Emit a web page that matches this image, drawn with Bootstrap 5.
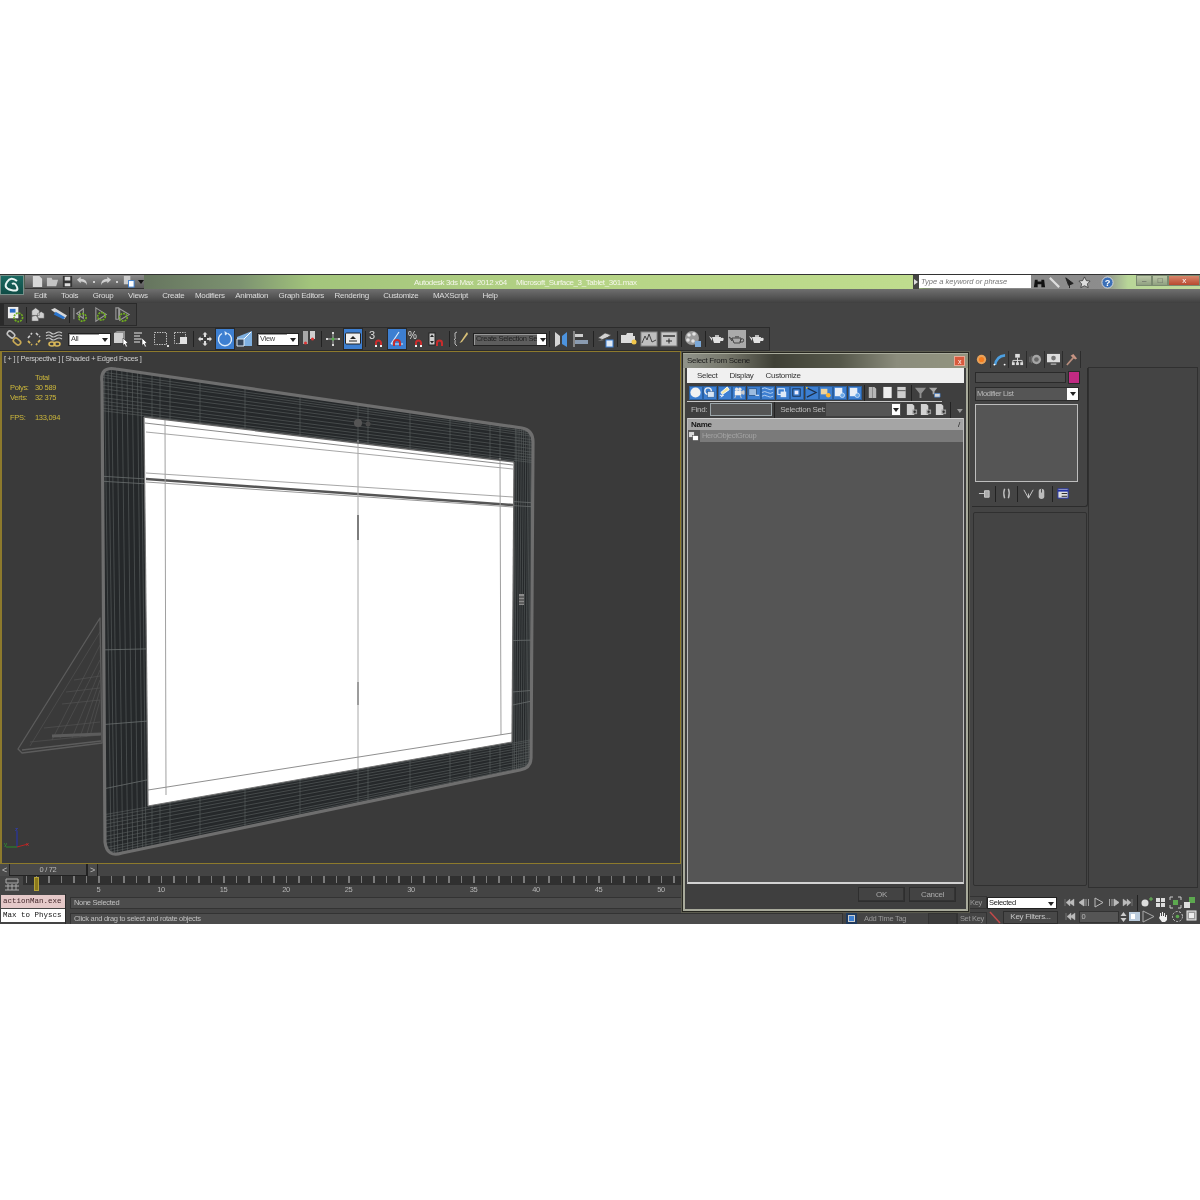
<!DOCTYPE html>
<html lang="en">
<head>
<meta charset="UTF-8">
<title>Autodesk 3ds Max 2012 x64</title>
<link href="https://cdn.jsdelivr.net/npm/bootstrap@5.3.0/dist/css/bootstrap.min.css" rel="stylesheet">
<style>
body { background:#fff; padding-top:274px; font-family:"Liberation Sans",Arial,sans-serif; font-size:7.5px; letter-spacing:-.3px; line-height:1; }
.max-app { width:1200px; height:650px; background:#444; color:#c8c8c8; position:relative; overflow:hidden; filter:blur(.45px); }
.ic { width:18px; height:18px; display:block; flex:none; }
.ic-sm { width:13px; height:13px; display:block; flex:none; }
.slot { width:20px; height:22px; flex:none; }
.slot.on { background:#3d7fd1; box-shadow:inset 0 0 0 1px #2a2a2a; }
.tsep { flex:none; align-self:center; height:16px; border-left:1px solid #222; margin:0 1.5px; }
.tsep2 { margin:0 2px; }

/* title and menu */
.title-row { height:15px; border-top:1px solid #333; background:linear-gradient(90deg,#4a5a4c 0,#66755f 12%,#7c9270 20%,#a3c57c 26%,#b6d486 50%,#bfdc8e 76%,#7c9168 77%,#858585 78%,#8d8d8d 92%,#b8d698 94%,#c2dc9a 100%); }
.logo-box { width:24px; height:20px; background:linear-gradient(#1c6b63,#0f4a44); box-shadow:inset 0 0 0 1px #78908a; z-index:2; }
.quick-bar { width:119px; height:14px; background:linear-gradient(#8a8a8a,#5a5a5a); border-bottom:1px solid #333; gap:2px; padding-left:2px; margin-left:1px; }
.qa-dot { width:6px; height:6px; flex:none; position:relative; }
.qa-dot::after { content:""; position:absolute; left:2px; top:2px; width:2px; height:2px; background:#ccc; }
.title-txt { width:224px; margin-left:270px; color:#f4f6ea; white-space:pre; font-size:8px; letter-spacing:-.4px; }
.search-arrow { width:6px; height:14px; background:#444; margin-left:275px; }
.search-box { width:112px; height:13px; padding:0 2px; border:0; border-radius:0; font-size:7.5px; line-height:13px; font-style:italic; color:#777; background:#fff; }
.search-box::placeholder { color:#777; opacity:1; }
.help-ic { margin-left:8px; }
.win-ctl { height:11px; width:16px; background:linear-gradient(#bcc8a8,#8fa080); border:1px solid #7a8a70; color:#555; font-size:8px; }
.win-ctl.close-red { width:32px; background:linear-gradient(#d8856a,#b84a30); color:#fff; }
.menu-row { height:14px; padding-left:34px; background:linear-gradient(#6f6f6f,#585858 50%,#404040); color:#dcdcdc; font-size:8px; }
.menu-row span { margin-right:14.5px; }
.menu-row span.snug { margin-left:-4px; }

/* toolbars */
.tb1-row { height:24px; }
.tb-float { width:137px; height:23px; border:1px solid #2a2a2a; border-left:4px solid #2a2a2a; background:#3f3f3f; padding-left:3px; }
.tb-float .ic { width:17px; height:17px; }
.tb2-row { height:24px; width:770px; padding-left:4px; border:1px solid #2c2c2c; border-left:0; background:#3f3f3f; }
.tb-combo { height:13px; flex:none; background:#fff; border:1px solid #222; color:#444; padding-left:2px; overflow:hidden; white-space:nowrap; box-shadow:inset 1px 1px 0 #999; }
.tb-combo.dim { background:#5d5d5d; color:#222; }
.combo-arrow { width:11px; height:100%; background:#fff; margin-left:auto; flex:none; position:relative; }
.combo-arrow::after { content:""; position:absolute; left:3px; top:4px; border:3px solid transparent; border-top:4px solid #222; border-bottom:0; }

/* viewport */
.middle-row { height:543px; }
.left-col { width:970px; }
.viewport-row { height:513px; }
.viewport { width:681px; height:513px; background:#3a3a3a; border:1px solid #8d7a2c; border-left:2px solid #8d7a2c; position:relative; overflow:hidden; }
.vp-canvas { position:absolute; left:-2px; top:-1px; width:681px; height:513px; }
.vp-label { position:absolute; left:2px; top:3px; color:#cfcfcf; white-space:pre; }
.vp-stats { position:absolute; left:8px; top:22px; color:#cdb83c; display:grid; grid-template-columns:25px 40px; row-gap:1.6px; line-height:8.4px; }

/* dialog */
.scene-dlg { position:absolute; left:682px; top:78px; width:287px; height:560px; padding:1px 4px 4px; background:#3f3f3f; border:1px solid #262620; outline:1px solid #5c5c50; box-shadow:inset 0 0 0 2px #a9ab9c; z-index:5; font-size:7.5px; }
.dlg-title { height:14px; margin:0 -4px; padding:0 3px 0 4px; color:#1c1c1c; font-size:8px; background:linear-gradient(90deg,#90938a 0,#77786c 15%,#3f4036 32%,#55574a 55%,#8b8c7c 75%,#92947f 100%); }
.dlg-close { width:11px; height:10px; background:#d8593c; box-shadow:inset 0 0 0 1px #e9a793; color:#fff; font-size:7px; }
.dlg-menu { height:15px; background:#f0f0f0; color:#333; padding-left:10px; gap:12px; font-size:8px; }
.dlg-tools { height:19px; padding:2px 0 1px 2px; margin-right:22px; border-bottom:1px solid #c8c8c8; }
.dlg-blue { width:14px; height:14px; margin-right:.45px; background:#3d7fd1; flex:none; box-shadow:inset 0 0 0 1px #2a5f9f; }
.dlg-plain { width:14.5px; height:14px; flex:none; }
.dlg-find { height:15px; padding-left:4px; color:#bbb; font-size:8px; white-space:nowrap; }
.dlg-input { height:13px; background:#555; border:1px solid #9aa4a8; flex:none; }
.dlg-input .combo-arrow { width:8px; }
.dlg-input .combo-arrow::after { left:1.5px; }
.dlg-list { height:466px; margin-top:1px; background:#555; border:1px solid #bcbcbc; border-top:0; border-bottom:2px solid #d2d2d2; }
.dlg-head { height:12px; background:#a5a5a5; color:#161616; font-weight:700; padding:0 3px; border-top:1px solid #d0d0d0; font-size:8px; }
.dlg-rowitem { height:12px; color:#a3a3a3; }
.dlg-rowname { background:#7a7a7a; height:12px; margin-left:1px; padding-left:2px; }
.dlg-foot { height:26px; gap:4px; padding:3px 8px 0 0; }
.dlg-btn { width:47px; height:15px; padding:0; border:1px solid #2e2e2e; border-radius:0; background:#434343; color:#aaa; font-size:8px; letter-spacing:-.3px; line-height:1; box-shadow:inset -1px -1px 0 #333; }

/* command panel */
.right-col { width:230px; height:537px; padding-left:2px; }
.cmd-col { width:116px; }
.cmd-tabs { height:17px; padding-left:1px; }
.cmd-tab { width:18px; height:17px; border-right:1px solid #2c2c2c; flex:none; }
.cmd-body { height:139px; border:1px solid #2c2c2c; border-top:0; border-left:0; padding:4px 3px; border-radius:0 0 3px 0; }
.name-field { height:11px; width:91px; background:#4d4d4d; border:1px solid #2a2a2a; }
.swatch { width:10px; height:11px; background:#c12a83; margin-left:3px; box-shadow:0 0 0 1px #2a2a2a; }
.mod-combo { height:14px; width:104px; margin-top:4px; background:#555; border:1px solid #2a2a2a; color:#bbb; padding-left:1px; }
.stack-box { height:78px; width:103px; margin-top:3px; border:1px solid #bdbdbd; background:#555; }
.stack-tools { height:19px; margin-top:2px; padding-left:3px; }
.stack-tools .tsep { margin:0 4px; }
.roll-box { height:374px; width:114px; margin-top:5px; margin-left:1px; border:1px solid #303030; border-radius:2px; }
.side-col { width:110px; margin-top:16px; height:521px; border:1px solid #303030; }

/* track and status */
.time-row { height:12px; background:#444; }
.time-btn { width:10px; height:12px; color:#bbb; background:#4b4b4b; border-right:1px solid #222; font-size:9px; }
.time-val { width:78px; height:12px; background:#4a4a4a; color:#bbb; border-bottom:1px solid #222; border-right:2px solid #222; }
.track-row { height:18px; }
.track-ico { width:23px; }
.ruler-wrap { width:947px; height:18px; position:relative; }
.ruler { height:9px; background-color:#303030; background-image:repeating-linear-gradient(90deg,#7a7a7a 0,#7a7a7a 1px,transparent 1px,transparent 12.5px); background-position:13px 0; background-repeat:repeat-x; background-size:auto 7px; }
.ruler-num { height:9px; position:relative; }
.ruler-num span { position:absolute; top:1px; color:#b5b5b5; transform:translateX(-50%); }
.frame-pos { position:absolute; left:11px; top:1px; width:5px; height:14px; background:#8c7a1c; border:1px solid #b5a338; }
.status-row { height:30px; background:#444; }
.script-col { width:66px; padding:1px 0 0 1px; gap:1px; border-right:1px solid #2a2a2a; }
.script-line { height:13px; font-family:"Liberation Mono",monospace; font-size:7.5px; letter-spacing:0; color:#111; padding-left:2px; white-space:nowrap; background:#fff; }
.script-line.pink { background:#e5c9c9; color:#43272b; }
.status-mid { width:921px; padding:2px 0 0 4px; gap:3px; }
.status-field { height:12px; background:#4c4c4c; color:#c0c0c0; padding-left:3px; border:1px solid #333; }
.tag-ic { width:11px; height:11px; background:#3d7fd1; margin:0 7px 0 3px; flex:none; box-shadow:inset 0 0 0 2px #203a5c, inset 0 0 0 3px #ccc; }
.tag-txt { width:64px; color:#9a9a9a; flex:none; }
.tag-box { width:29px; height:12px; background:#3c3c3c; border:1px solid #333; flex:none; }
.setkey { width:30px; height:13px; flex:none; color:#9a9a9a; background:#454545; border:1px solid #333; white-space:nowrap; }
.status-right { width:213px; padding-top:2px; }
.status-line { height:14px; }
.sel-combo { width:70px; height:12px; background:#fff; color:#222; border:1px solid #222; padding-left:1px; flex:none; }
.keyfilt { width:55px; height:13px; background:#484848; border:1px solid #2e2e2e; color:#c5c5c5; flex:none; font-size:8px; }
.frame-field { width:40px; height:12px; background:#555; border:1px solid #333; color:#bbb; padding-left:2px; flex:none; }
.mini { width:14.5px; height:14px; flex:none; }
.mini-run { margin-left:6px; }
.mini-run2 { margin-left:1px; }
</style>
</head>
<body>

<svg width="0" height="0" class="position-absolute">
  <defs>
    <symbol id="i-link" viewBox="0 0 18 18"><g fill="none" stroke="#c4c4c4" stroke-width="1.600"><rect x="2" y="2" width="8" height="5" rx="2.500" transform="rotate(40 6 4.500)"/></g><rect x="8" y="9" width="8" height="5" rx="2.500" transform="rotate(40 12 11.500)" fill="none" stroke="#c9aa55" stroke-width="1.600"/></symbol>
    <symbol id="i-unlink" viewBox="0 0 18 18"><g fill="none" stroke="#cfcfcf" stroke-width="1.600" stroke-dasharray="3 1.500"><path d="M3 8 L7 3 M11 3 L15 7"/></g><g fill="none" stroke="#d8b75a" stroke-width="1.800" stroke-dasharray="3 1.500"><path d="M3 11 L7 15 M15 10 L11 15"/></g></symbol>
    <symbol id="i-bind" viewBox="0 0 18 18"><g fill="none" stroke="#c8c8c8" stroke-width="1.100"><path d="M1 3q3-2 5 0t5 0 6 0M1 6q3-2 5 0t5 0 6 0M1 9q3-2 5 0t5 0 6 0"/></g><g fill="none" stroke="#d8b75a" stroke-width="1.600"><ellipse cx="7" cy="14" rx="3" ry="2"/><ellipse cx="12" cy="14" rx="3" ry="2"/></g></symbol>
    <symbol id="i-select" viewBox="0 0 18 18"><rect x="2" y="3" width="9" height="10" fill="#cfcfcf"/><path d="M2 3l3-2h8v9l-2 3V3z" fill="#8f8f8f"/><path d="M11 8l5 5-2 .5 1.500 3-1.500.5-1.500-3-1.500 1.500z" fill="#fff" stroke="#222" stroke-width=".5"/></symbol>
    <symbol id="i-byname" viewBox="0 0 18 18"><path d="M2 3h8M2 6h6M2 9h8M2 12h6" stroke="#b0b0b0" stroke-width="1.500"/><path d="M10 8l5 5-2 .5 1.500 3-1.500.5-1.500-3-1.500 1.500z" fill="#fff" stroke="#222" stroke-width=".5"/></symbol>
    <symbol id="i-rect" viewBox="0 0 18 18"><rect x="2.500" y="2.500" width="12" height="12" fill="#3f3f3f" stroke="#c0c0c0" stroke-dasharray="1.500 1"/><path d="M15 15h2v2h-2z" fill="#ddd"/></symbol>
    <symbol id="i-cross" viewBox="0 0 18 18"><rect x="2.500" y="2.500" width="11" height="11" fill="none" stroke="#bdbdbd" stroke-dasharray="1.500 1"/><rect x="8" y="7" width="7" height="7" fill="#e2e2e2"/></symbol>
    <symbol id="i-move" viewBox="0 0 18 18"><path d="M9 2l2.500 2.500H10V7H8V4.500H6.500zM9 16l-2.500-2.500H8V11h2v2.500h1.500zM2 9l2.500-2.500V8H7v2H4.500v1.500zM16 9l-2.500 2.500V10H11V8h2.500V6.500z" fill="#dcdcdc"/></symbol>
    <symbol id="i-rotate" viewBox="0 0 18 18"><path d="M6 3.500A6.500 6.500 0 1 0 12 3.500" fill="none" stroke="#dcebfa" stroke-width="1.400"/><path d="M8.500 1l3.500 2.500-3 2z" fill="#dcebfa"/></symbol>
    <symbol id="i-scale" viewBox="0 0 18 18"><path d="M1 7L16 1v15H1z" fill="#7fb0e0"/><path d="M1 9h7v7H1z" fill="#36465a" stroke="#dbe9f7"/><path d="M8 9L15 2" stroke="#fff"/></symbol>
    <symbol id="i-refs" viewBox="0 0 18 18"><rect x="3" y="1" width="5" height="13" fill="#a8a8a8"/><rect x="10" y="1" width="5" height="8" fill="#cfcfcf"/><circle cx="5.500" cy="13" r="1.500" fill="#d33"/><circle cx="12.500" cy="9" r="1.500" fill="#d33"/></symbol>
    <symbol id="i-pivot" viewBox="0 0 18 18"><path d="M9 3v12M3 9h12" stroke="#b8b8b8"/><path d="M8 2h2v2H8zM2 8h2v2H2zM14 8h2v2h-2zM8 14h2v2H8z" fill="#d8d8d8"/><circle cx="9" cy="9" r="1.500" fill="#55b04a"/></symbol>
    <symbol id="i-kbd" viewBox="0 0 18 18"><rect x="1.500" y="3" width="15" height="11" rx="1" fill="#efefef" stroke="#222"/><path d="M9 6l3 3H6z" fill="#222"/><path d="M5 11h8" stroke="#222"/></symbol>
    <symbol id="i-magnet" viewBox="0 0 18 18"><path d="M8 16v-3a2.500 2.500 0 0 1 5 0v3" fill="none" stroke="#c92c2c" stroke-width="2"/><path d="M7 15h2v2H7zM12 15h2v2h-2z" fill="#eee"/></symbol>
    <symbol id="i-angle" viewBox="0 0 18 18"><path d="M3 14L11 2M3 14h12" stroke="#dcebfa" stroke-width="1.200"/><path d="M6 16v-3a3 3 0 0 1 6 0v3" fill="none" stroke="#c92c2c" stroke-width="2"/></symbol>
    <symbol id="i-spin" viewBox="0 0 18 18"><rect x="1" y="3" width="6" height="12" fill="#cfcfcf" stroke="#222"/><path d="M4 4.500l2 2.500H2zM4 13.500L2 11h4z" fill="#222"/><path d="M9 16v-3a2.500 2.500 0 0 1 5 0v3" fill="none" stroke="#c92c2c" stroke-width="2"/></symbol>
    <symbol id="i-named" viewBox="0 0 18 18"><path d="M5 2q-3 0-2 4t-1 3q2 1 1 3t2 4" fill="none" stroke="#bbb"/><path d="M15 2L9 11l-1.500 2 2.500-1 6-8z" fill="#d8c078"/></symbol>
    <symbol id="i-mirror" viewBox="0 0 18 18"><path d="M3 2l5 4v8l-5 3z" fill="#d5d5d5"/><path d="M15 2l-5 4v8l5 3z" fill="#4d93dd"/></symbol>
    <symbol id="i-align" viewBox="0 0 18 18"><path d="M2 1v16" stroke="#ccc"/><rect x="3" y="4" width="8" height="3" fill="#cfcfcf"/><rect x="3" y="10" width="13" height="4" fill="#8a9bb0"/></symbol>
    <symbol id="i-layers" viewBox="0 0 18 18"><path d="M2 8l7-5 6 2-7 5zM2 11l6-1 6-4" fill="#d2d2d2" stroke="#444" stroke-width=".6"/><rect x="10" y="10" width="7" height="7" fill="#dfe9f5" stroke="#3d7fd1"/></symbol>
    <symbol id="i-folder" viewBox="0 0 18 18"><path d="M1 5h5l1-2h6v3h2v7H1z" fill="#dcdcdc"/><circle cx="14" cy="12" r="2.500" fill="#f1c64a"/></symbol>
    <symbol id="i-curve" viewBox="0 0 18 18"><rect x="1" y="2" width="16" height="14" fill="#bfbfbf" stroke="#888"/><path d="M2 13l3-7 2 4 2-6 3 8 4-2" fill="none" stroke="#444"/></symbol>
    <symbol id="i-sched" viewBox="0 0 18 18"><rect x="1" y="2" width="16" height="14" fill="#c8c8c8" stroke="#777"/><path d="M3 6h12" stroke="#333" stroke-width="1.500"/><path d="M6 11h6M9 8.500v5" stroke="#222"/></symbol>
    <symbol id="i-mat" viewBox="0 0 18 18"><circle cx="8" cy="8" r="7" fill="#9a9a9a"/><g fill="#e3e3e3"><circle cx="5" cy="5" r="1.800"/><circle cx="10" cy="4" r="1.800"/><circle cx="4" cy="10" r="1.800"/><circle cx="9" cy="11" r="1.800"/></g><rect x="11" y="11" width="6" height="6" fill="#7ba8d8"/></symbol>
    <symbol id="i-teapot" viewBox="0 0 18 18"><path d="M4 7h9l-1 6H6zM1 6l3 2v3zM13 8q4-1 2 3h-3z" fill="#e0e0e0"/><path d="M7 5h4v2H7z" fill="#bbb"/></symbol>
    <symbol id="i-teaframe" viewBox="0 0 18 18"><rect x="0" y="0" width="18" height="18" fill="#aaa"/><path d="M4 8h9l-1 5H6zM1 7l3 2v2zM13 9q4-1 2 3h-3z" fill="none" stroke="#444"/><path d="M7 6h4v2H7z" fill="#666"/></symbol>
    <symbol id="i-doc" viewBox="0 0 14 14"><path d="M3 1h6l2 2v10H3z" fill="#b8b8b8"/><path d="M7 1v12" stroke="#888"/></symbol>
    <symbol id="i-docw" viewBox="0 0 14 14"><rect x="2.500" y="1" width="9" height="12" fill="#eee"/></symbol>
    <symbol id="i-docg" viewBox="0 0 14 14"><rect x="2.500" y="1" width="9" height="12" fill="#cfcfcf"/><path d="M2.500 5h9" stroke="#555"/></symbol>
    <symbol id="i-funnel" viewBox="0 0 14 14"><path d="M1 2h12L8 8v5H6V8z" fill="#8f8f8f"/></symbol>
    <symbol id="i-funnel2" viewBox="0 0 14 14"><path d="M1 2h9L7 6v3H5V6z" fill="#a8a8a8"/><path d="M7 8h6v4H7z" fill="#d5d5d5" stroke="#3d7fd1" stroke-width=".7"/></symbol>
    <symbol id="i-docplus" viewBox="0 0 14 14"><path d="M2 1h6l2 2v10H2z" fill="#d2d2d2"/><path d="M8 7h5v5H8z" fill="#9e9e9e"/><path d="M10.500 8v3M9 9.500h3" stroke="#222"/></symbol>
    <symbol id="i-group" viewBox="0 0 14 14"><rect x="1" y="1" width="7" height="7" fill="#d8d8d8" stroke="#444" stroke-width=".6"/><rect x="6" y="6" width="7" height="6" fill="#fff" stroke="#444" stroke-width=".6"/></symbol>
    <symbol id="b-sphere" viewBox="0 0 14 14"><circle cx="7" cy="7" r="5.500" fill="#f1f1f1"/></symbol>
    <symbol id="b-shapes" viewBox="0 0 14 14"><circle cx="5.500" cy="5.500" r="3.500" fill="none" stroke="#eee" stroke-width="1.500"/><rect x="5" y="6" width="7" height="6" fill="#d8e6f5" stroke="#27507f" stroke-width=".5"/></symbol>
    <symbol id="b-light" viewBox="0 0 14 14"><path d="M10 1L3 7l2 2 7-5zM2 10h4M3 12l3-2" stroke="#fff" fill="#f2e7a5"/></symbol>
    <symbol id="b-cam" viewBox="0 0 14 14"><rect x="3" y="5" width="7" height="5" fill="#f1f1f1"/><circle cx="5" cy="3.500" r="1.800" fill="#e4e4e4"/><circle cx="8.500" cy="3.500" r="1.800" fill="#e4e4e4"/><path d="M10 6l3-1v4l-3-1zM4 10l-1 3M9 10l1 3" fill="#ccc" stroke="#ccc"/></symbol>
    <symbol id="b-helper" viewBox="0 0 14 14"><rect x="2" y="3" width="8" height="7" fill="#9bbbe0" stroke="#1c3f68" stroke-width=".6"/><path d="M9 10h4" stroke="#fff"/></symbol>
    <symbol id="b-wave" viewBox="0 0 14 14"><path d="M1 3q3-2 6 0t6 0M1 7q3-2 6 0t6 0M1 11q3-2 6 0t6 0" stroke="#b9d2ef" fill="none"/></symbol>
    <symbol id="b-group" viewBox="0 0 14 14"><rect x="2" y="3" width="7" height="6" fill="none" stroke="#fff"/><rect x="5" y="6" width="6" height="6" fill="#dfeaf7"/></symbol>
    <symbol id="b-frame" viewBox="0 0 14 14"><rect x="3" y="3" width="8" height="8" fill="none" stroke="#1d3250"/><rect x="5" y="5" width="4" height="4" fill="#eef"/></symbol>
    <symbol id="b-bone" viewBox="0 0 14 14"><path d="M2 2l10 5-10 5" fill="none" stroke="#1d2f48" stroke-width="1.300"/><circle cx="2" cy="2" r="1" fill="#fc3"/></symbol>
    <symbol id="b-xref" viewBox="0 0 14 14"><rect x="2" y="3" width="7" height="6" fill="#eed29b"/><circle cx="10" cy="10" r="2.500" fill="#ffb733"/></symbol>
    <symbol id="b-doc" viewBox="0 0 14 14"><rect x="2" y="2" width="8" height="9" fill="#e8eef6"/><circle cx="10" cy="10" r="2.500" fill="#6aa7e6" stroke="#fff" stroke-width=".6"/></symbol>
    <symbol id="c-sun" viewBox="0 0 14 14"><circle cx="7" cy="7" r="5" fill="#e8a25a"/><circle cx="7" cy="7" r="2.800" fill="#f57d1f"/></symbol>
    <symbol id="c-arc" viewBox="0 0 14 14"><path d="M1 13Q2 2 13 1v3Q5 5 3.500 13z" fill="#4d9fe0"/><circle cx="1.500" cy="12.500" r="1" fill="#fff"/><circle cx="12.500" cy="12.500" r="1" fill="#fff"/></symbol>
    <symbol id="c-tree" viewBox="0 0 14 14"><rect x="4.500" y="1" width="5" height="4" fill="#ddd"/><path d="M7 5v3M2 11V8h10v3M7 8v3" stroke="#ddd" fill="none"/><rect x="1" y="10" width="3" height="3" fill="#ddd"/><rect x="5.500" y="10" width="3" height="3" fill="#ddd"/><rect x="10" y="10" width="3" height="3" fill="#ddd"/></symbol>
    <symbol id="c-motion" viewBox="0 0 14 14"><circle cx="8" cy="7" r="5" fill="#a5a5a5"/><circle cx="8" cy="7" r="2.500" fill="#666"/><path d="M1 4v6M3 3v8" stroke="#777"/></symbol>
    <symbol id="c-screen" viewBox="0 0 14 14"><rect x="0" y="1" width="14" height="9" fill="#ddd"/><circle cx="7" cy="5.500" r="2.500" fill="#777"/><path d="M4 12h6" stroke="#aaa" stroke-width="1.500"/></symbol>
    <symbol id="c-hammer" viewBox="0 0 14 14"><path d="M2 13L9 5" stroke="#b98e7d" stroke-width="1.800"/><path d="M6 3l3-2 4 5-2 1z" fill="#c89483"/></symbol>
    <symbol id="t-first" viewBox="0 0 13 13"><path d="M2 3v7M11 3L6 6.500 11 10zM7 3L3 6.500 7 10z" fill="#bbb" stroke="#bbb" stroke-width=".4"/></symbol>
    <symbol id="t-prev" viewBox="0 0 13 13"><path d="M6 3L1 6.500 6 10zM8 3v7M10.500 3v7" fill="#bbb" stroke="#bbb" stroke-width=".8"/></symbol>
    <symbol id="t-play" viewBox="0 0 13 13"><path d="M3 2l8 4.500-8 4.500z" fill="none" stroke="#bbb"/></symbol>
    <symbol id="t-next" viewBox="0 0 13 13"><path d="M7 3l5 3.500L7 10zM5 3v7M2.500 3v7" fill="#bbb" stroke="#bbb" stroke-width=".8"/></symbol>
    <symbol id="t-last" viewBox="0 0 13 13"><path d="M11 3v7M2 3l5 3.500L2 10zM6 3l4 3.500L6 10z" fill="#bbb" stroke="#bbb" stroke-width=".4"/></symbol>
    <symbol id="t-zoom" viewBox="0 0 13 13"><circle cx="5" cy="7" r="3.500" fill="#ddd"/><path d="M11 1v4M9 3h4" stroke="#6bbb5a"/></symbol>
    <symbol id="t-grid" viewBox="0 0 13 13"><path d="M2 2h4v4H2zM7 2h4v4H7zM2 7h4v4H2zM7 7h4v4H7z" fill="#ddd"/></symbol>
    <symbol id="t-ext" viewBox="0 0 13 13"><path d="M1 4V1h3M9 1h3v3M12 9v3H9M4 12H1V9" stroke="#ccc" fill="none"/><rect x="4" y="4" width="5" height="5" fill="#5ca84f"/></symbol>
    <symbol id="t-ext2" viewBox="0 0 13 13"><rect x="6" y="1" width="6" height="6" fill="#5ca84f"/><rect x="1" y="6" width="6" height="6" fill="#ddd"/></symbol>
    <symbol id="t-pan" viewBox="0 0 13 13"><path d="M3 6V3h1v3h1V2h1v4h1V3h1v4h1V5h1v5l-2 2H5L2 8z" fill="#eee"/></symbol>
    <symbol id="t-orbit" viewBox="0 0 13 13"><circle cx="6.500" cy="6.500" r="5" fill="none" stroke="#ccc" stroke-dasharray="2 1.500"/><circle cx="6.500" cy="6.500" r="1.800" fill="#5ca84f"/></symbol>
    <symbol id="t-maxi" viewBox="0 0 13 13"><rect x="1" y="1" width="9" height="9" fill="#999" stroke="#eee"/><rect x="3" y="3" width="5" height="5" fill="#eee"/></symbol>
    <symbol id="t-tri" viewBox="0 0 13 13"><path d="M1 1l11 5.500L1 12z" fill="none" stroke="#aaa"/></symbol>
    <symbol id="t-conf" viewBox="0 0 13 13"><rect x="1" y="2" width="11" height="9" fill="#bcd"/><rect x="3" y="4" width="4" height="5" fill="#fff"/></symbol>
  </defs>
</svg>

<div class="max-app d-flex flex-column">

  <!-- title bar -->
  <div class="title-row d-flex align-items-start flex-shrink-0">
    <div class="logo-box d-flex align-items-center justify-content-center flex-shrink-0">
      <svg class="ic" viewBox="0 0 18 18"><path d="M14 5Q8 0 4 6t4 8 6-3-5-3" fill="none" stroke="#e9f4f2" stroke-width="2"/></svg>
    </div>
    <div class="quick-bar d-flex align-items-center flex-shrink-0">
      <svg class="ic-sm ms-1" viewBox="0 0 14 14"><path d="M2 1h7l3 3v9H2z" fill="#d8d8d8"/></svg>
      <svg class="ic-sm" viewBox="0 0 14 14"><path d="M1 3h5l1 2h6l-2 7H1z" fill="#c4c4c4"/></svg>
      <svg class="ic-sm" viewBox="0 0 14 14"><path d="M2 1h10v12H2z" fill="#333"/><path d="M4 2h6v4H4zM4 9h6v3H4z" fill="#ddd"/></svg>
      <svg class="ic-sm" viewBox="0 0 14 14"><path d="M1 5l4-3v2q7 0 7 7-2-4-7-4v2z" fill="#d0d0d0"/></svg>
      <span class="qa-dot"></span>
      <svg class="ic-sm" viewBox="0 0 14 14"><path d="M13 5L9 2v2q-7 0-7 7 2-4 7-4v2z" fill="#d0d0d0"/></svg>
      <span class="qa-dot"></span>
      <svg class="ic-sm" viewBox="0 0 14 14"><path d="M2 1h7v9H2z" fill="#ccc"/><rect x="7" y="6" width="6" height="7" fill="#fff" stroke="#3d7fd1"/></svg>
      <svg width="8" height="8" class="flex-shrink-0" viewBox="0 0 8 8"><path d="M1 2h6L4 6z" fill="#111"/></svg>
    </div>
    <div class="title-txt pt-1 flex-shrink-0">Autodesk 3ds Max  2012 x64     Microsoft_Surface_3_Tablet_361.max</div>
    <div class="search-arrow flex-shrink-0 d-flex align-items-center"><svg width="6" height="6" viewBox="0 0 6 6"><path d="M1 0l4 3-4 3z" fill="#ddd"/></svg></div>
    <input class="form-control search-box flex-shrink-0" placeholder="Type a keyword or phrase">
    <div class="d-flex align-items-center flex-shrink-0" style="height:14px;gap:2px;padding-left:2px">
      <svg class="ic-sm" viewBox="0 0 14 14"><path d="M2 4h3v8H1zM9 4h3l1 8H9zM5 6h4v3H5z" fill="#111"/></svg>
      <svg class="ic-sm" viewBox="0 0 14 14"><path d="M2 2l5 5 5 5" stroke="#ddd" stroke-width="2.400"/></svg>
      <svg class="ic-sm" viewBox="0 0 14 14"><path d="M3 2l8 6-5 2zM7 9v4" fill="#222" stroke="#222"/></svg>
      <svg class="ic-sm" viewBox="0 0 14 14"><path d="M7 1l2 4 4 .5-3 3 1 4-4-2-4 2 1-4-3-3 4-.5z" fill="#ddd" stroke="#222" stroke-width=".7"/></svg>
      <svg class="ic-sm help-ic" viewBox="0 0 14 14"><circle cx="7" cy="7" r="6" fill="#3a6fb8" stroke="#ddd"/><text x="7" y="10.500" text-anchor="middle" font-size="10" font-weight="700" fill="#fff" font-family="Liberation Sans">?</text></svg>
    </div>
    <div class="d-flex ms-auto me-0 flex-shrink-0 gap-0">
      <div class="win-ctl d-flex align-items-center justify-content-center">&#8211;</div>
      <div class="win-ctl d-flex align-items-center justify-content-center">&#9633;</div>
      <div class="win-ctl close-red d-flex align-items-center justify-content-center">x</div>
    </div>
  </div>

  <!-- menu bar -->
  <div class="menu-row d-flex align-items-center flex-shrink-0">
    <span>Edit</span><span>Tools</span><span>Group</span><span>Views</span><span>Create</span><span class="snug">Modifiers</span><span class="snug">Animation</span><span class="snug">Graph Editors</span><span class="snug">Rendering</span><span>Customize</span><span>MAXScript</span><span>Help</span>
  </div>

  <!-- floating toolbar -->
  <div class="tb1-row flex-shrink-0">
    <div class="tb-float d-flex align-items-center">
      <svg class="ic" viewBox="0 0 18 18"><rect x="1" y="1" width="11" height="12" fill="#eee"/><rect x="3" y="3" width="6" height="4" fill="#2a6cc4"/><circle cx="12" cy="12" r="4.500" fill="none" stroke="#6fae1e" stroke-width="1.800" stroke-dasharray="2 1"/></svg>
      <span class="tsep tsep2"></span>
      <svg class="ic" viewBox="0 0 18 18"><path d="M3 5l4-3 4 3v5H3zM9 8l4-2 3 2v5H9zM3 11l4-1 3 2v4H3z" fill="#cfcfcf" stroke="#555" stroke-width=".5"/></svg>
      <svg class="ic ms-1" viewBox="0 0 18 18"><path d="M1 4l4-2 13 8-3 4z" fill="#d8d8d8"/><path d="M6 6l10 6-2 2L4 9z" fill="#2a74cc"/></svg>
      <span class="tsep tsep2"></span>
      <svg class="ic" viewBox="0 0 18 18"><path d="M2 2v12M12 3L5 8l7 5zM8 5v8" fill="none" stroke="#999" stroke-width="1.200"/><circle cx="11" cy="12" r="4" fill="none" stroke="#6fae1e" stroke-width="1.800" stroke-dasharray="2 1"/></svg>
      <svg class="ic ms-1" viewBox="0 0 18 18"><path d="M3 2l11 7-11 7z" fill="none" stroke="#999" stroke-width="1.200"/><circle cx="9" cy="11" r="4" fill="none" stroke="#6fae1e" stroke-width="1.800" stroke-dasharray="2 1"/></svg>
      <svg class="ic ms-1" viewBox="0 0 18 18"><path d="M2 2h3v12H2zM6 3l10 6-10 6z" fill="none" stroke="#999" stroke-width="1.200"/><circle cx="10" cy="12" r="4" fill="none" stroke="#6fae1e" stroke-width="1.800" stroke-dasharray="2 1"/></svg>
    </div>
  </div>

  <!-- main toolbar -->
  <div class="tb2-row d-flex align-items-center flex-shrink-0">
    <div class="slot d-flex align-items-center justify-content-center"><svg class="ic"><use href="#i-link"/></svg></div>
    <div class="slot d-flex align-items-center justify-content-center"><svg class="ic"><use href="#i-unlink"/></svg></div>
    <div class="slot d-flex align-items-center justify-content-center"><svg class="ic"><use href="#i-bind"/></svg></div>
    <div class="tb-combo d-flex align-items-center ms-1" style="width:43px">All<span class="combo-arrow"></span></div>
    <div class="slot d-flex align-items-center justify-content-center"><svg class="ic"><use href="#i-select"/></svg></div>
    <div class="slot d-flex align-items-center justify-content-center"><svg class="ic"><use href="#i-byname"/></svg></div>
    <div class="slot d-flex align-items-center justify-content-center"><svg class="ic"><use href="#i-rect"/></svg></div>
    <div class="slot d-flex align-items-center justify-content-center"><svg class="ic"><use href="#i-cross"/></svg></div>
    <span class="tsep"></span>
    <div class="slot d-flex align-items-center justify-content-center"><svg class="ic"><use href="#i-move"/></svg></div>
    <div class="slot on d-flex align-items-center justify-content-center"><svg class="ic"><use href="#i-rotate"/></svg></div>
    <div class="slot d-flex align-items-center justify-content-center"><svg class="ic"><use href="#i-scale"/></svg></div>
    <div class="tb-combo d-flex align-items-center" style="width:42px;margin-left:2px">View<span class="combo-arrow"></span></div>
    <div class="slot d-flex align-items-center justify-content-center"><svg class="ic"><use href="#i-refs"/></svg></div>
    <span class="tsep"></span>
    <div class="slot d-flex align-items-center justify-content-center"><svg class="ic"><use href="#i-pivot"/></svg></div>
    <div class="slot on d-flex align-items-center justify-content-center"><svg class="ic"><use href="#i-kbd"/></svg></div>
    <span class="tsep"></span>
    <div class="slot d-flex align-items-center justify-content-center"><svg class="ic" viewBox="0 0 18 18"><use href="#i-magnet"/><text x="1" y="9" font-size="11" fill="#ddd" font-family="Liberation Sans">3</text></svg></div>
    <div class="slot on d-flex align-items-center justify-content-center"><svg class="ic"><use href="#i-angle"/></svg></div>
    <div class="slot d-flex align-items-center justify-content-center"><svg class="ic" viewBox="0 0 18 18"><use href="#i-magnet"/><text x="0" y="9" font-size="10" fill="#ddd" font-family="Liberation Sans">%</text></svg></div>
    <div class="slot d-flex align-items-center justify-content-center"><svg class="ic"><use href="#i-spin"/></svg></div>
    <span class="tsep"></span>
    <div class="slot d-flex align-items-center justify-content-center"><svg class="ic"><use href="#i-named"/></svg></div>
    <div class="tb-combo dim d-flex align-items-center" style="width:74px;margin-left:2px">Create Selection Se<span class="combo-arrow"></span></div>
    <span class="tsep"></span>
    <div class="slot d-flex align-items-center justify-content-center"><svg class="ic"><use href="#i-mirror"/></svg></div>
    <div class="slot d-flex align-items-center justify-content-center"><svg class="ic"><use href="#i-align"/></svg></div>
    <span class="tsep"></span>
    <div class="slot d-flex align-items-center justify-content-center"><svg class="ic"><use href="#i-layers"/></svg></div>
    <span class="tsep"></span>
    <div class="slot d-flex align-items-center justify-content-center"><svg class="ic"><use href="#i-folder"/></svg></div>
    <div class="slot d-flex align-items-center justify-content-center"><svg class="ic"><use href="#i-curve"/></svg></div>
    <div class="slot d-flex align-items-center justify-content-center"><svg class="ic"><use href="#i-sched"/></svg></div>
    <span class="tsep"></span>
    <div class="slot d-flex align-items-center justify-content-center"><svg class="ic"><use href="#i-mat"/></svg></div>
    <span class="tsep"></span>
    <div class="slot d-flex align-items-center justify-content-center"><svg class="ic"><use href="#i-teapot"/></svg></div>
    <div class="slot d-flex align-items-center justify-content-center"><svg class="ic"><use href="#i-teaframe"/></svg></div>
    <div class="slot d-flex align-items-center justify-content-center"><svg class="ic"><use href="#i-teapot"/></svg></div>
  </div>

  <!-- viewport + panels -->
  <div class="middle-row d-flex flex-shrink-0">
    <div class="left-col d-flex flex-column flex-shrink-0">
      <div class="viewport-row">
        <div class="viewport">
          <svg id="model" class="vp-canvas" viewBox="0 351 681 513"></svg>
          <div class="vp-label">[ + ] [ Perspective ] [ Shaded + Edged Faces ]</div>
          <div class="vp-stats">
            <span></span><span>Total</span>
            <span>Polys:</span><span>30 589</span>
            <span>Verts:</span><span>32 375</span>
            <span>&nbsp;</span><span></span>
            <span>FPS:</span><span>133,094</span>
          </div>
        </div>
      </div>
      <div class="time-row d-flex align-items-center flex-shrink-0">
        <div class="time-btn d-flex align-items-center justify-content-center">&lt;</div>
        <div class="time-val d-flex align-items-center justify-content-center">0 / 72</div>
        <div class="time-btn d-flex align-items-center justify-content-center">&gt;</div>
      </div>
      <div class="track-row d-flex flex-shrink-0">
        <div class="track-ico d-flex align-items-center justify-content-center">
          <svg class="ic" viewBox="0 0 18 18"><path d="M3 3h12v4H3z" fill="none" stroke="#aaa"/><path d="M2 10h14M5 8v6M13 8v6M9 8v6M2 14h14" stroke="#aaa"/></svg>
        </div>
        <div class="ruler-wrap">
          <div class="ruler"></div>
          <div class="ruler-num" id="rulerNums"></div>
          <div class="frame-pos"></div>
        </div>
      </div>
    </div>

    <div class="right-col d-flex flex-shrink-0">
      <div class="cmd-col flex-shrink-0">
        <div class="cmd-tabs d-flex">
          <div class="cmd-tab d-flex align-items-center justify-content-center"><svg class="ic-sm"><use href="#c-sun"/></svg></div>
          <div class="cmd-tab d-flex align-items-center justify-content-center"><svg class="ic-sm"><use href="#c-arc"/></svg></div>
          <div class="cmd-tab d-flex align-items-center justify-content-center"><svg class="ic-sm"><use href="#c-tree"/></svg></div>
          <div class="cmd-tab d-flex align-items-center justify-content-center"><svg class="ic-sm"><use href="#c-motion"/></svg></div>
          <div class="cmd-tab d-flex align-items-center justify-content-center"><svg class="ic-sm"><use href="#c-screen"/></svg></div>
          <div class="cmd-tab d-flex align-items-center justify-content-center"><svg class="ic-sm"><use href="#c-hammer"/></svg></div>
        </div>
        <div class="cmd-body">
          <div class="d-flex"><div class="name-field"></div><div class="swatch"></div></div>
          <div class="mod-combo d-flex align-items-center">Modifier List<span class="combo-arrow"></span></div>
          <div class="stack-box"></div>
          <div class="stack-tools d-flex align-items-center">
            <svg class="ic-sm" viewBox="0 0 14 14"><path d="M1 7h6M7 4h5v7H7z" stroke="#ccc" fill="#aaa"/></svg>
            <span class="tsep"></span>
            <svg class="ic-sm" viewBox="0 0 14 14"><path d="M5 2q-2 5 0 10M9 2q2 5 0 10" stroke="#bbb" stroke-width="1.500" fill="none"/></svg>
            <span class="tsep"></span>
            <svg class="ic-sm" viewBox="0 0 14 14"><path d="M2 3l5 9 5-9M7 12V7" stroke="#ccc" fill="none"/></svg>
            <svg class="ic-sm" viewBox="0 0 14 14"><path d="M4 5a3 3 0 0 1 6 0v5a3 3 0 0 1-6 0z" fill="#bbb"/><path d="M7 2v4" stroke="#444"/></svg>
            <span class="tsep"></span>
            <svg class="ic-sm" viewBox="0 0 14 14"><rect x="1" y="2" width="11" height="10" fill="#ddd" stroke="#2332a8"/><path d="M1 4h11" stroke="#2332a8" stroke-width="2"/><path d="M5 7h6M5 10h6" stroke="#222"/></svg>
          </div>
        </div>
        <div class="roll-box"></div>
      </div>
      <div class="side-col flex-shrink-0"></div>
    </div>
  </div>

  <!-- status area -->
  <div class="status-row d-flex flex-shrink-0">
    <div class="script-col d-flex flex-column flex-shrink-0">
      <div class="script-line pink d-flex align-items-center">actionMan.exe</div>
      <div class="script-line d-flex align-items-center">Max to Physcs</div>
    </div>
    <div class="status-mid d-flex flex-column flex-shrink-0">
      <div class="d-flex align-items-center">
        <div class="status-field flex-grow-1 d-flex align-items-center">None Selected</div>
        <div class="setkey d-flex align-items-center justify-content-end pe-1">Key</div>
      </div>
      <div class="d-flex align-items-center">
        <div class="status-field flex-grow-1 d-flex align-items-center">Click and drag to select and rotate objects</div>
        <div class="tag-ic"></div>
        <div class="tag-txt">Add Time Tag</div>
        <div class="tag-box"></div>
        <div class="setkey d-flex align-items-center justify-content-center">Set Key</div>
      </div>
    </div>
    <div class="status-right d-flex flex-column flex-shrink-0">
      <div class="status-line d-flex align-items-center">
        <div class="sel-combo d-flex align-items-center">Selected<span class="combo-arrow"></span></div>
        <div class="mini-run d-flex">
          <div class="mini"><svg class="ic-sm"><use href="#t-first"/></svg></div>
          <div class="mini"><svg class="ic-sm"><use href="#t-prev"/></svg></div>
          <div class="mini"><svg class="ic-sm"><use href="#t-play"/></svg></div>
          <div class="mini"><svg class="ic-sm"><use href="#t-next"/></svg></div>
          <div class="mini"><svg class="ic-sm"><use href="#t-last"/></svg></div>
        </div>
        <span class="tsep"></span>
        <div class="d-flex">
          <div class="mini"><svg class="ic-sm"><use href="#t-zoom"/></svg></div>
          <div class="mini"><svg class="ic-sm"><use href="#t-grid"/></svg></div>
          <div class="mini"><svg class="ic-sm"><use href="#t-ext"/></svg></div>
          <div class="mini"><svg class="ic-sm"><use href="#t-ext2"/></svg></div>
        </div>
      </div>
      <div class="status-line d-flex align-items-center">
        <svg class="flex-shrink-0" width="16" height="13" viewBox="0 0 16 13"><path d="M3 1l10 11" stroke="#c24a4a" stroke-width="1.500"/></svg>
        <div class="keyfilt d-flex align-items-center justify-content-center">Key Filters...</div>
        <div class="mini mini-run"><svg class="ic-sm"><use href="#t-first"/></svg></div>
        <div class="frame-field d-flex align-items-center">0</div>
        <svg class="flex-shrink-0 mini-run2" width="7" height="12" viewBox="0 0 7 12"><path d="M3.500 1l3 4H.500zM3.500 11l-3-4h6z" fill="#ccc"/></svg>
        <div class="d-flex mini-run2">
          <div class="mini"><svg class="ic-sm"><use href="#t-conf"/></svg></div>
          <div class="mini"><svg class="ic-sm"><use href="#t-tri"/></svg></div>
          <div class="mini"><svg class="ic-sm"><use href="#t-pan"/></svg></div>
          <div class="mini"><svg class="ic-sm"><use href="#t-orbit"/></svg></div>
          <div class="mini"><svg class="ic-sm"><use href="#t-maxi"/></svg></div>
        </div>
      </div>
    </div>
  </div>

  <!-- Select From Scene window -->
  <div class="scene-dlg d-flex flex-column">
    <div class="dlg-title d-flex align-items-center flex-shrink-0">
      <span>Select From Scene</span>
      <span class="dlg-close d-flex align-items-center justify-content-center ms-auto">x</span>
    </div>
    <div class="dlg-menu d-flex align-items-center flex-shrink-0"><span>Select</span><span>Display</span><span>Customize</span></div>
    <div class="dlg-tools d-flex align-items-center flex-shrink-0">
      <div class="dlg-blue"><svg class="ic-sm"><use href="#b-sphere"/></svg></div>
      <div class="dlg-blue"><svg class="ic-sm"><use href="#b-shapes"/></svg></div>
      <div class="dlg-blue"><svg class="ic-sm"><use href="#b-light"/></svg></div>
      <div class="dlg-blue"><svg class="ic-sm"><use href="#b-cam"/></svg></div>
      <div class="dlg-blue"><svg class="ic-sm"><use href="#b-helper"/></svg></div>
      <div class="dlg-blue"><svg class="ic-sm"><use href="#b-wave"/></svg></div>
      <div class="dlg-blue"><svg class="ic-sm"><use href="#b-group"/></svg></div>
      <div class="dlg-blue"><svg class="ic-sm"><use href="#b-frame"/></svg></div>
      <div class="dlg-blue"><svg class="ic-sm"><use href="#b-bone"/></svg></div>
      <div class="dlg-blue"><svg class="ic-sm"><use href="#b-xref"/></svg></div>
      <div class="dlg-blue"><svg class="ic-sm"><use href="#b-doc"/></svg></div>
      <div class="dlg-blue"><svg class="ic-sm"><use href="#b-doc"/></svg></div>
      <span class="tsep"></span>
      <div class="dlg-plain"><svg class="ic-sm"><use href="#i-doc"/></svg></div>
      <div class="dlg-plain"><svg class="ic-sm"><use href="#i-docw"/></svg></div>
      <div class="dlg-plain"><svg class="ic-sm"><use href="#i-docg"/></svg></div>
      <span class="tsep"></span>
      <div class="dlg-plain"><svg class="ic-sm"><use href="#i-funnel"/></svg></div>
      <div class="dlg-plain"><svg class="ic-sm"><use href="#i-funnel2"/></svg></div>
    </div>
    <div class="dlg-find d-flex align-items-center flex-shrink-0">
      <span style="width:20px">Find:</span>
      <div class="dlg-input" style="width:62px"></div>
      <span class="tsep"></span>
      <span class="ms-1" style="width:47px">Selection Set:</span>
      <div class="dlg-input d-flex" style="width:75px;border-color:#555"><span class="combo-arrow"></span></div>
      <div class="dlg-plain ms-1"><svg class="ic-sm"><use href="#i-docplus"/></svg></div>
      <div class="dlg-plain"><svg class="ic-sm"><use href="#i-docplus"/></svg></div>
      <div class="dlg-plain"><svg class="ic-sm"><use href="#i-docplus"/></svg></div>
      <span class="tsep"></span>
      <svg class="ms-1" width="8" height="8" viewBox="0 0 8 8"><path d="M1 3h6L4 7z" fill="#999"/></svg>
    </div>
    <div class="dlg-list flex-shrink-0">
      <div class="dlg-head d-flex align-items-center justify-content-between"><span>Name</span><span class="fw-normal">/</span></div>
      <div class="dlg-rowitem d-flex align-items-center">
        <svg class="ic-sm" style="width:11px;height:11px"><use href="#i-group"/></svg>
        <div class="dlg-rowname flex-grow-1 d-flex align-items-center">HeroObjectGroup</div>
      </div>
    </div>
    <div class="dlg-foot d-flex align-items-start justify-content-end flex-shrink-0">
      <button class="btn dlg-btn" type="button">OK</button>
      <button class="btn dlg-btn" type="button">Cancel</button>
    </div>
  </div>
</div>

<script>
  // wireframe of the tablet, page coordinates
  const svg = document.getElementById('model');
  const inner = [[144,417],[514,462],[512,742],[148,806]];
  const outline = 'M102 382Q100 366 116 369L522 428Q533 430 533 442L531 758Q531 768 520 770L122 853Q107 858 105 842Z';
  const mix = (a, b, s) => a + (b - a) * s;
  let out = '';
  const line = (x1, y1, x2, y2, c, w) => {
    out += `<line x1="${x1.toFixed(1)}" y1="${y1.toFixed(1)}" x2="${x2.toFixed(1)}" y2="${y2.toFixed(1)}" stroke="${c}" stroke-width="${w}"/>`;
  };

  // kickstand
  out += `<polygon points="100,618 18,749 22,753 102,743" fill="#3a3a3a" stroke="#5c5c5c" stroke-width="1.300" stroke-linejoin="round"/>`;
  [[100,632,30,746],[100,645,52,740],[100,660,60,738],[100,670,72,738],[100,680,80,737],[100,690,86,737],[100,700,90,736]].forEach(l => line(l[0],l[1],l[2],l[3],'#565656',.6));
  [[62,704,100,700],[66,692,100,688],[74,680,100,676],[44,728,100,722],[30,742,100,735]].forEach(l => line(l[0],l[1],l[2],l[3],'#565656',.6));
  line(52,736,101,734,'#5c5c5c',3);
  line(22,750,101,741,'#5c5c5c',1.500);

  // bezel, wires clipped to the outline
  out += `<clipPath id="bezelClip"><path d="${outline}"/></clipPath>`;
  out += `<path d="${outline}" fill="#25282a"/><g clip-path="url(#bezelClip)">`;
  const wire = '#5d6161';
  [.08,.14,.2,.3,.38,.46,.56,.66,.74,.82,.9,.96].forEach(s => {
    line(98, mix(368,412,s), 537, mix(430,464.5,s), wire, .6);
    line(98, mix(858,814,s), 537, mix(767,737.6,s), wire, .6);
  });
  [.1,.18,.26,.38,.5,.62,.74,.86,.94].forEach(s => {
    line(mix(100,143.4,s), 360, mix(107,148.6,s), 860, wire, .6);
    line(mix(533,514.4,s), 420, mix(530,511.6,s), 780, wire, .6);
  });
  [152,160,170,200,245,300,358,368,410,450,470,490,500].forEach(x => line(x, 360, x, 860, wire, .6));
  [[476,503],[481,507],[650,640],[725,690],[790,700]].forEach(y => line(98, y[0], 537, y[1], '#6a6e6e', .8));
  out += `</g>`;
  out += `<path d="${outline}" fill="none" stroke="#6e6e6e" stroke-width="3.200"/>`;

  // screen
  out += `<polygon points="${inner.map(p => p.join(',')).join(' ')}" fill="#fff"/>`;
  line(145,423,513,465,'#8a8a8a',1);
  line(146,432,513,469,'#8f8f8f',.8);
  line(146,473,513,497,'#8f8f8f',.8);
  line(146,479,513,505,'#555',2.400);
  line(146,482,513,507,'#999',1);
  line(165,420,166,795,'#a0a0a0',1);
  line(358,440,358,770,'#a8a8a8',1);
  line(358,515,358,540,'#444',1.200);
  line(358,682,358,705,'#666',1);
  line(500,458,501,735,'#a0a0a0',1);
  line(148,790,512,733,'#8f8f8f',1);
  line(144,417,514,462,'#666',1.500);
  line(514,462,512,742,'#666',1.200);
  line(144,417,148,806,'#777',1.200);
  line(148,806,512,742,'#777',1);

  // camera and side buttons
  out += `<circle cx="358" cy="423" r="4" fill="#555"/><circle cx="368" cy="424" r="2.500" fill="#4a4a4a"/>`;
  out += `<rect x="519" y="594" width="5" height="11" fill="#8a8a8a"/><path d="M519 597h5M519 600h5M519 603h5" stroke="#333"/>`;

  // axis tripod
  line(17,847,17,831,'#2233b8',1);
  line(17,847,28,844,'#b82222',1);
  line(17,847,6,847,'#2a8a2a',1);
  out += `<text x="15" y="831" font-size="6" fill="#2f3fd0" font-family="Liberation Sans">z</text><text x="26" y="846" font-size="6" fill="#d03030" font-family="Liberation Sans">x</text><text x="4" y="846" font-size="6" fill="#30a030" font-family="Liberation Sans">y</text>`;
  svg.innerHTML = out;

  // frame numbers under the track bar
  const nums = document.getElementById('rulerNums');
  for (let f = 5; f <= 70; f += 5) {
    const s = document.createElement('span');
    s.textContent = f;
    s.style.left = (13 + f * 12.5) + 'px';
    nums.appendChild(s);
  }
</script>
<script src="https://cdn.jsdelivr.net/npm/bootstrap@5.3.0/dist/js/bootstrap.bundle.min.js"></script>
</body>
</html>
